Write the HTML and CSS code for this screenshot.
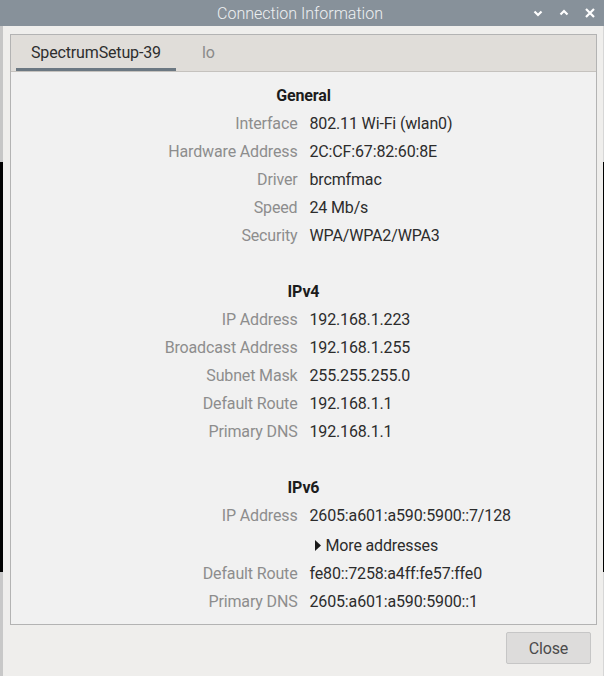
FILE: index.html
```html
<!DOCTYPE html>
<html>
<head>
<meta charset="utf-8">
<link rel="stylesheet" href="styles.css">
</head>
<body>
<div class="window">
  <div class="titlebar">
    <div></div>
    <div class="title">Connection Information</div>
    <div class="controls">
      <svg width="12" height="10" viewBox="0 0 12 10"><path d="M2.5 3.5 L6 7 L9.5 3.5" fill="none" stroke="#fff" stroke-width="2.2"/></svg>
      <svg width="12" height="10" viewBox="0 0 12 10"><path d="M2.5 6.5 L6 3 L9.5 6.5" fill="none" stroke="#fff" stroke-width="2.2"/></svg>
      <svg width="12" height="10" viewBox="0 0 12 10"><path d="M2 1 L10 9 M10 1 L2 9" fill="none" stroke="#fff" stroke-width="2.2"/></svg>
    </div>
  </div>
  <div class="main">
    <div class="edge-left"></div>
    <div class="dialog">
      <div class="notebook">
        <div class="tabs">
          <div class="tab active">SpectrumSetup-39</div>
          <div class="tab">lo</div>
        </div>
        <div class="page">
          <div class="heading">General</div>
          <div class="label">Interface</div><div class="value">802.11 Wi-Fi (wlan0)</div>
          <div class="label">Hardware Address</div><div class="value">2C:CF:67:82:60:8E</div>
          <div class="label">Driver</div><div class="value">brcmfmac</div>
          <div class="label">Speed</div><div class="value">24 Mb/s</div>
          <div class="label">Security</div><div class="value">WPA/WPA2/WPA3</div>
          <div class="blank"></div>
          <div class="heading">IPv4</div>
          <div class="label">IP Address</div><div class="value">192.168.1.223</div>
          <div class="label">Broadcast Address</div><div class="value">192.168.1.255</div>
          <div class="label">Subnet Mask</div><div class="value">255.255.255.0</div>
          <div class="label">Default Route</div><div class="value">192.168.1.1</div>
          <div class="label">Primary DNS</div><div class="value">192.168.1.1</div>
          <div class="blank"></div>
          <div class="heading">IPv6</div>
          <div class="label">IP Address</div><div class="value">2605:a601:a590:5900::7/128</div>
          <div class="label expander-row"></div>
          <div class="value expander-row"><span class="expander"><svg width="6" height="11" viewBox="0 0 6 11"><path d="M0 0 L6 5.5 L0 11 Z" fill="#1a1a1a"/></svg>More addresses</span></div>
          <div class="label">Default Route</div><div class="value">fe80::7258:a4ff:fe57:ffe0</div>
          <div class="label">Primary DNS</div><div class="value">2605:a601:a590:5900::1</div>
        </div>
      </div>
      <div class="actions">
        <button class="btn">Close</button>
      </div>
    </div>
    <div class="edge-right"></div>
  </div>
</div>
</body>
</html>
```

FILE: styles.css
```css
html, body {
  margin: 0;
  padding: 0;
}
body {
  width: 604px;
  height: 676px;
  overflow: hidden;
  background: #efeeec;
  font-family: Roboto, "Liberation Sans", sans-serif;
  font-size: 16px;
  letter-spacing: -0.15px;
}
.window {
  width: 604px;
  height: 676px;
  display: flex;
  flex-direction: column;
}
.titlebar {
  height: 26px;
  flex: none;
  background: #87919a;
  display: grid;
  grid-template-columns: 1fr auto 1fr;
  align-items: center;
}
.title {
  color: #eef0f2;
  font-size: 16px;
  font-weight: 300;
  letter-spacing: 0;
  padding-right: 4px;
}
.controls {
  display: flex;
  justify-content: flex-end;
  align-items: center;
  gap: 14px;
  padding-right: 8px;
}
.controls svg {
  display: block;
}
.main {
  flex: 1;
  display: flex;
}
.edge-left {
  width: 3px;
  flex: none;
  background: linear-gradient(to bottom, #c6c6c6 0, #c6c6c6 136px, #000 136px, #000 546px, #c8c8c8 546px);
}
.edge-right {
  width: 1px;
  flex: none;
  background: linear-gradient(to bottom, #d6d6d6 0, #d6d6d6 136px, #000 136px, #000 546px, #d6d6d6 546px);
}
.dialog {
  flex: 1;
  display: flex;
  flex-direction: column;
  padding: 8px 6px 12px 7px;
}
.notebook {
  border: 1px solid #b3b3b3;
  background: #f1f1f1;
}
.tabs {
  height: 36px;
  background: #e0ddd9;
  border-bottom: 1px solid #c5c2be;
  display: flex;
  align-items: stretch;
  padding-left: 5px;
}
.tab {
  padding: 0 12px 0 15px;
  display: flex;
  align-items: center;
  color: #8a8a8a;
  margin-right: 11px;
  border-bottom: 3px solid transparent;
  padding-top: 1px;
  box-sizing: border-box;
}
.tab.active {
  color: #2e2e2e;
  border-bottom-color: #6c7882;
  padding-right: 15px;
}
.page {
  display: grid;
  grid-template-columns: 1fr 1fr;
  column-gap: 12px;
  grid-auto-rows: minmax(28px, auto);
  padding: 9px 0;
}
.heading {
  grid-column: 1 / 3;
  text-align: center;
  font-weight: 700;
  color: #1c1c1c;
  display: flex;
  align-items: center;
  justify-content: center;
}
.blank {
  grid-column: 1 / 3;
}
.label {
  text-align: right;
  color: #8d8d8d;
  display: flex;
  align-items: center;
  justify-content: flex-end;
}
.value {
  color: #2c2c2c;
  display: flex;
  align-items: center;
}
.expander-row {
  height: 30px;
  padding-top: 2px;
  box-sizing: border-box;
}
.expander {
  display: flex;
  align-items: center;
  gap: 5px;
  margin-left: 5px;
}
.expander svg {
  display: block;
}
.actions {
  display: flex;
  justify-content: flex-end;
  padding-top: 7px;
  padding-right: 6px;
}
.btn {
  width: 85px;
  height: 32px;
  background: #dddcdb;
  border: 1px solid #c6c6c6;
  border-radius: 2px;
  font-family: Roboto, "Liberation Sans", sans-serif;
  font-size: 16px;
  letter-spacing: -0.15px;
  color: #4b4b4b;
  padding: 0;
}
```
